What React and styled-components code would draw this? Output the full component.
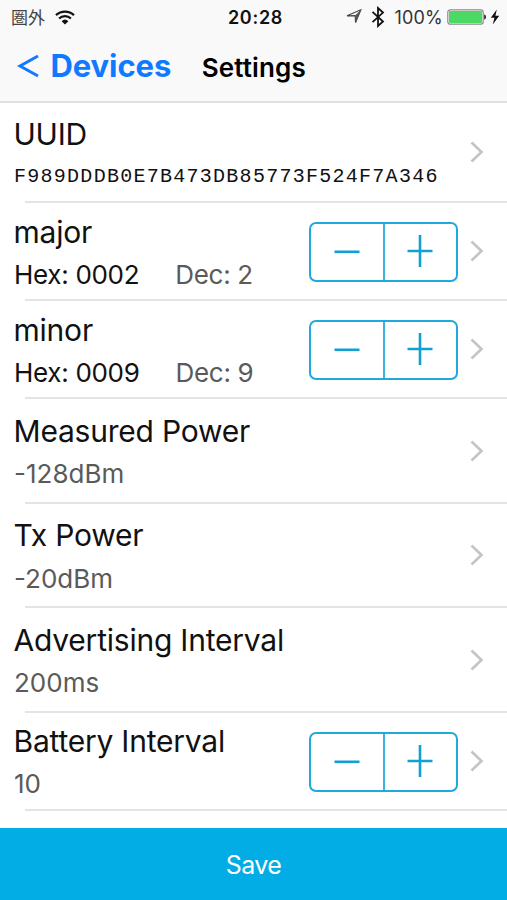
import React, { useState } from 'react';
import styled, { createGlobalStyle } from 'styled-components';

const GlobalStyle = createGlobalStyle`
  body {
    margin: 0;
    background: #fff;
    font-family: Inter, 'Noto Sans CJK JP', sans-serif;
    color: #111;
  }

  button {
    margin: 0;
    padding: 0;
    border: none;
    background: none;
    font-family: inherit;
    cursor: pointer;
  }
`;

const Screen = styled.div`
  display: flex;
  flex-direction: column;
  width: 507px;
  height: 900px;
  overflow: hidden;
  white-space: nowrap;
`;

const Header = styled.header`
  box-sizing: border-box;
  height: 103px;
  border-bottom: 2px solid #e0e0e0;
  background: #f9f9f9;
`;

const StatusBar = styled.div`
  display: grid;
  grid-template-columns: 1fr auto 1fr;
  align-items: center;
  height: 34px;
  padding: 0 7px 0 11px;
`;

const StatusGroup = styled.div`
  display: flex;
  align-items: center;
  justify-content: ${({ $end }) => ($end ? 'flex-end' : 'flex-start')};

  svg {
    flex: none;
  }
`;

const Carrier = styled.span`
  margin-right: 10px;
  color: #444;
  font-family: 'Noto Sans CJK JP', sans-serif;
  font-size: 17px;
  line-height: 34px;
`;

const Time = styled.span`
  font-size: 18px;
  font-weight: 600;
  letter-spacing: 0.7px;
`;

const Percent = styled.span`
  margin: 0 4px 0 9px;
  color: #333;
  font-size: 18px;
  letter-spacing: 0.2px;
`;

const NavBar = styled.nav`
  display: flex;
  align-items: center;
  height: 64px;
  padding-left: 17px;
`;

const BackButton = styled.button`
  display: flex;
  align-items: center;
  gap: 11.5px;
  color: #0f7aff;
  font-size: 31px;
  font-weight: 700;
  line-height: 40px;
  letter-spacing: -0.1px;
`;

const Heading = styled.h1`
  margin: 3px 0 0 30.5px;
  color: #000;
  font-size: 26px;
  font-weight: 600;
  line-height: 40px;
  letter-spacing: 0.15px;
`;

const List = styled.main`
  flex: 1;
`;

const Row = styled.section`
  box-sizing: border-box;
  display: flex;
  height: ${({ $height }) => $height}px;
  padding: 0 23px 0 14px;
  background: linear-gradient(#e4e4e6, #e4e4e6) 25px 100% / 100% 2px no-repeat;
`;

const Info = styled.div`
  flex: 1;
  padding-top: ${({ $top }) => $top}px;
`;

const Title = styled.h2`
  margin: 0 0 0 -0.5px;
  font-size: 30px;
  font-weight: 400;
  line-height: 36px;
  letter-spacing: -0.22px;
`;

const Values = styled.div`
  display: flex;
  gap: 36px;
  margin-top: ${({ $gap }) => $gap}px;
`;

const Value = styled.span`
  color: ${({ $dark }) => ($dark ? '#111' : '#5a5a5a')};
  font-size: 26px;
  line-height: 32px;
  letter-spacing: ${({ $tight }) => ($tight ? '-0.3px' : '0')};
`;

const Uuid = styled.code`
  font-family: 'Liberation Mono', monospace;
  font-size: 20px;
  line-height: 24px;
  letter-spacing: 1.27px;
`;

const Accessory = styled.div`
  display: flex;
  align-items: center;
  gap: 12px;
`;

const Stepper = styled.div`
  box-sizing: border-box;
  display: flex;
  width: 149px;
  height: 60px;
  border: 2px solid #1fa9dc;
  border-radius: 7px;
`;

const StepButton = styled.button`
  display: flex;
  flex: 1;
  align-items: center;
  justify-content: center;
  padding-bottom: 2px;

  & + & {
    border-left: 2px solid #38b3e0;
  }
`;

const SaveButton = styled.button`
  height: 72px;
  padding: 2px 0 0;
  background: #02ace4;
  color: #fff;
  font-size: 25px;
  letter-spacing: -0.6px;
`;

const Chevron = () => (
  <svg width="14" height="24" viewBox="0 0 14 24" fill="none">
    <path d="M1.5 1.5 11.5 11 1.5 20.5" stroke="#c4c4c7" strokeWidth="2.6" />
  </svg>
);

const Minus = () => (
  <svg width="26" height="32" viewBox="0 0 26 32">
    <path d="M.5 16.8h25" stroke="#129fd2" strokeWidth="2.6" />
  </svg>
);

const Plus = () => (
  <svg width="26" height="32" viewBox="0 0 26 32">
    <path d="M.5 16h25M13 0v32" stroke="#129fd2" strokeWidth="2.6" />
  </svg>
);

const Wifi = () => (
  <svg width="20" height="15" viewBox="0 0 20 15" fill="none" stroke="#111" strokeWidth="2.3">
    <path d="M1 5.2a13 13 0 0 1 18 0" />
    <path d="M4.1 8.5a8.6 8.6 0 0 1 11.8 0" />
    <path d="M6.6 11.2a5 5 0 0 1 6.8 0L10 14.6z" fill="#111" stroke="none" />
  </svg>
);

const Location = () => (
  <svg width="17" height="18" viewBox="0 0 17 18">
    <path d="M1 7.8 14.8 1.8 9.6 14.6 9.2 7.6z" fill="none" stroke="#444" strokeWidth="1.2" />
    <path d="M14.8 1.8 9.2 7.6l.4 7z" fill="#555" />
  </svg>
);

const Bluetooth = () => (
  <svg width="14" height="22" viewBox="0 0 14 22">
    <path d="M1.5 5.8 12 15.5 7 20V2l5 4.6L1.5 16.2" fill="none" stroke="#111" strokeWidth="1.8" />
  </svg>
);

const Battery = () => (
  <svg width="40" height="18" viewBox="0 0 40 18">
    <rect x=".8" y="1.8" width="35.4" height="14.4" rx="2.4" fill="#fff" stroke="#8b8b8b" strokeWidth="1.2" />
    <rect x="2" y="3" width="33" height="12" rx="1" fill="#4bd964" />
    <path d="M37.2 6.5c2.4.3 2.4 4.7 0 5z" fill="#222" />
  </svg>
);

const Bolt = () => (
  <svg width="10" height="16" viewBox="0 0 10 16">
    <path d="M6.8.5.8 8.8h3.6L2.8 15.5 9.2 6.8H5.4z" fill="#111" />
  </svg>
);

const StatusIcons = styled.div`
  display: flex;
  align-items: center;
  gap: 8px;
`;

const Power = styled.div`
  display: flex;
  align-items: center;
  gap: 3px;
`;

const settings = [
  { title: 'UUID', uuid: 'F989DDDB0E7B473DB85773F524F7A346', height: 100, top: 13, gap: 13 },
  { title: 'major', hex: '0002', value: 2, height: 98, top: 11, gap: 9 },
  { title: 'minor', hex: '0009', value: 9, height: 98, top: 11, gap: 9 },
  { title: 'Measured Power', value: -128, unit: 'dBm', height: 105, top: 14, gap: 9 },
  { title: 'Tx Power', value: -20, unit: 'dBm', height: 104, top: 13, gap: 10 },
  { title: 'Advertising Interval', value: 200, unit: 'ms', height: 105, top: 14, gap: 9 },
  { title: 'Battery Interval', value: 10, height: 98, top: 10, gap: 9, stepper: true },
];

const Setting = ({ title, uuid, hex, value, unit = '', height, top, gap, stepper = Boolean(hex) }) => {
  const [current, setCurrent] = useState(value);

  return (
    <Row $height={height}>
      <Info $top={top}>
        <Title>{title}</Title>
        <Values $gap={gap}>
          {uuid && <Uuid>{uuid}</Uuid>}
          {hex && (
            <>
              <Value $dark $tight>{`Hex: ${current.toString(16).toUpperCase().padStart(4, '0')}`}</Value>
              <Value $tight>{`Dec: ${current}`}</Value>
            </>
          )}
          {!uuid && !hex && <Value>{`${current}${unit}`}</Value>}
        </Values>
      </Info>
      <Accessory>
        {stepper && (
          <Stepper>
            <StepButton aria-label="Decrease" onClick={() => setCurrent(Math.max(0, current - 1))}>
              <Minus />
            </StepButton>
            <StepButton aria-label="Increase" onClick={() => setCurrent(current + 1)}>
              <Plus />
            </StepButton>
          </Stepper>
        )}
        <Chevron />
      </Accessory>
    </Row>
  );
};

const App = () => (
  <>
    <GlobalStyle />
    <Screen>
      <Header>
        <StatusBar>
          <StatusGroup>
            <Carrier>圏外</Carrier>
            <Wifi />
          </StatusGroup>
          <Time>20:28</Time>
          <StatusGroup $end>
            <StatusIcons>
              <Location />
              <Bluetooth />
            </StatusIcons>
            <Percent>100%</Percent>
            <Power>
              <Battery />
              <Bolt />
            </Power>
          </StatusGroup>
        </StatusBar>
        <NavBar>
          <BackButton>
            <svg width="22" height="24" viewBox="0 0 22 24">
              <path d="M21 2 3 12l18 10" fill="none" stroke="#0f7aff" strokeWidth="3" />
            </svg>
            Devices
          </BackButton>
          <Heading>Settings</Heading>
        </NavBar>
      </Header>
      <List>
        {settings.map((setting) => (
          <Setting key={setting.title} {...setting} />
        ))}
      </List>
      <SaveButton>Save</SaveButton>
    </Screen>
  </>
);

export default App;
